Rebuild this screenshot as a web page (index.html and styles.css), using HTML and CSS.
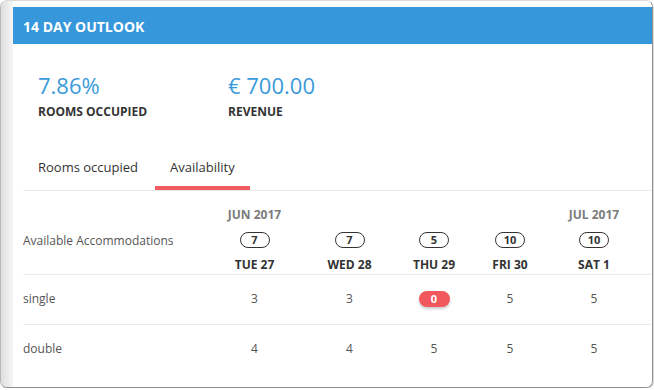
FILE: index.html
```html
<!DOCTYPE html>
<html lang="en">
<head>
  <meta charset="UTF-8" />
  <title>14 Day Outlook</title>
  <link rel="stylesheet" href="styles.css">
</head>
<body>

  <div class="frame">
    <div class="gutter"></div>

    <div class="panel">
      <div class="panel-head">14 DAY OUTLOOK</div>

      <div class="stats">
        <div class="stat">
          <div class="stat-value">7.86%</div>
          <div class="stat-label">ROOMS OCCUPIED</div>
        </div>
        <div class="stat">
          <div class="stat-value">€ 700.00</div>
          <div class="stat-label">REVENUE</div>
        </div>
      </div>

      <div class="tabs">
        <div class="tab">Rooms occupied</div>
        <div class="tab active">Availability</div>
      </div>

      <table class="avail">
        <colgroup>
          <col class="col-label">
          <col style="width: 105px">
          <col style="width: 85px">
          <col style="width: 84px">
          <col style="width: 68px">
          <col style="width: 100px">
          <col style="width: 7px">
        </colgroup>
        <thead>
          <tr>
            <th class="label">Available Accommodations</th>
            <th><div class="month">JUN 2017</div><span class="count">7</span><div class="day">TUE 27</div></th>
            <th><div class="month"></div><span class="count">7</span><div class="day">WED 28</div></th>
            <th><div class="month"></div><span class="count">5</span><div class="day">THU 29</div></th>
            <th><div class="month"></div><span class="count">10</span><div class="day">FRI 30</div></th>
            <th><div class="month">JUL 2017</div><span class="count">10</span><div class="day">SAT 1</div></th>
            <th></th>
          </tr>
        </thead>
        <tbody>
          <tr>
            <td class="label">single</td>
            <td>3</td>
            <td>3</td>
            <td><span class="none">0</span></td>
            <td>5</td>
            <td>5</td>
            <td></td>
          </tr>
          <tr>
            <td class="label">double</td>
            <td>4</td>
            <td>4</td>
            <td>5</td>
            <td>5</td>
            <td>5</td>
            <td></td>
          </tr>
        </tbody>
      </table>
    </div>
  </div>

</body>
</html>
```

FILE: styles.css
```css
* {
  box-sizing: border-box;
}

body {
  margin: 0;
  font-family: "Open Sans", "Liberation Sans", sans-serif;
  background: #fff;
}

.frame {
  display: flex;
  width: 653px;
  height: 388px;
  border: 1px solid #dadada;
  border-left-color: #b8b8b8;
  border-right-color: #8f8f8f;
  border-bottom-color: #8f8f8f;
  border-radius: 7px;
  overflow: hidden;
  box-shadow: 1px 1px 1px rgba(0, 0, 0, 0.15);
}

.gutter {
  flex: none;
  width: 12px;
  background: linear-gradient(to right, #dedede, #f6f6f6);
}

.panel {
  flex: 1;
  min-width: 0;
  padding-top: 6px;
  overflow: hidden;
  background: #fff;
}

.panel-head {
  display: flex;
  align-items: center;
  height: 37px;
  padding: 2px 0 0 10px;
  background: #3797db;
  color: #fff;
  font-size: 14px;
  font-weight: 700;
}

.stats {
  display: flex;
  padding: 26px 0 0 25px;
}

.stat {
  width: 190px;
}

.stat-value {
  font-size: 22px;
  line-height: 30px;
  color: #3a9ad9;
}

.stat-label {
  margin-top: 4px;
  font-size: 12px;
  font-weight: 700;
  line-height: 16px;
  color: #333;
}

.tabs {
  display: flex;
  gap: 2px;
  margin: 28px 0 0 10px;
  border-bottom: 1px solid #ebebeb;
}

.tab {
  padding: 10px 15px 10px;
  font-size: 13px;
  line-height: 18px;
  color: #333;
  border-bottom: 4px solid transparent;
}

.tab.active {
  border-bottom-color: #f05a60;
}

.avail {
  margin-left: 10px;
  width: 628px;
  table-layout: fixed;
  border-collapse: collapse;
}

.col-label {
  width: 179px;
}

.avail th {
  padding: 16px 0 1px;
  border-bottom: 1px solid #ebebeb;
  text-align: center;
  vertical-align: top;
}

.avail th.label {
  vertical-align: middle;
  text-align: left;
  font-size: 12px;
  font-weight: 400;
  color: #555;
}

.month {
  height: 16px;
  font-size: 12px;
  font-weight: 700;
  line-height: 16px;
  color: #7b7b7b;
}

.count {
  display: inline-block;
  width: 30px;
  height: 16px;
  margin-top: 9px;
  border: 1px solid #333;
  border-radius: 8px;
  font-size: 11px;
  font-weight: 700;
  line-height: 14px;
  color: #333;
}

.day {
  margin-top: 8px;
  font-size: 12px;
  font-weight: 700;
  line-height: 16px;
  color: #333;
}

.avail td {
  height: 50px;
  padding: 0 0 3px;
  border-bottom: 1px solid #ebebeb;
  text-align: center;
  vertical-align: middle;
  font-size: 12px;
  color: #555;
}

.avail tbody tr:last-child td {
  border-bottom: none;
}

.avail td.label {
  text-align: left;
}

.none {
  display: inline-block;
  width: 31px;
  height: 16px;
  border-radius: 8px;
  background: #f2575e;
  box-shadow: 0 2px 3px rgba(0, 0, 0, 0.2);
  color: #fff;
  font-size: 11px;
  font-weight: 700;
  line-height: 16px;
}
```
